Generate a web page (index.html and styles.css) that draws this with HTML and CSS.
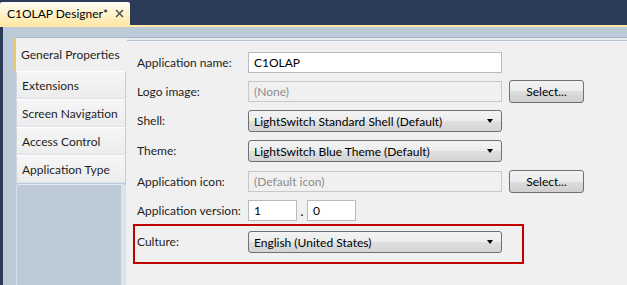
FILE: index.html
```html
<!DOCTYPE html>
<html>
<head>
<meta charset="utf-8">
<link rel="stylesheet" href="styles.css">
</head>
<body>
<div class="doc-tabs">
  <div class="doc-tab">
    <span class="doc-title">C1OLAP Designer*</span>
    <svg class="close" width="9" height="9" viewBox="0 0 9 9"><path d="M1 1L8 8M8 1L1 8" stroke="#505050" stroke-width="1.5" fill="none"/></svg>
  </div>
</div>
<div class="doc-strip"></div>
<div class="doc-body">
  <div class="page">
    <div class="side">
      <div class="vtab active">General Properties</div>
      <div class="vtab">Extensions</div>
      <div class="vtab">Screen Navigation</div>
      <div class="vtab">Access Control</div>
      <div class="vtab">Application Type</div>
      <div class="side-fill"></div>
    </div>
    <div class="content">
      <div class="row r1">
        <div class="label">Application name:</div>
        <div class="textbox">C1OLAP</div>
      </div>
      <div class="row r2">
        <div class="label">Logo image:</div>
        <div class="textbox disabled">(None)</div>
        <div class="button">Select...</div>
      </div>
      <div class="row r3">
        <div class="label">Shell:</div>
        <div class="combo"><span>LightSwitch Standard Shell (Default)</span><span class="arrow"></span></div>
      </div>
      <div class="row r4">
        <div class="label">Theme:</div>
        <div class="combo"><span>LightSwitch Blue Theme (Default)</span><span class="arrow"></span></div>
      </div>
      <div class="row r5">
        <div class="label">Application icon:</div>
        <div class="textbox disabled">(Default icon)</div>
        <div class="button">Select...</div>
      </div>
      <div class="row r6">
        <div class="label">Application version:</div>
        <div class="textbox small">1</div>
        <div class="dot">.</div>
        <div class="textbox small">0</div>
      </div>
      <div class="highlight">
        <div class="row">
          <div class="label">Culture:</div>
          <div class="combo"><span>English (United States)</span><span class="arrow"></span></div>
        </div>
      </div>
    </div>
  </div>
</div>
</body>
</html>
```

FILE: styles.css
```css
* { box-sizing: border-box; }
html, body { margin: 0; padding: 0; }
body {
  width: 627px;
  height: 285px;
  overflow: hidden;
  background: #2b3b58;
  font-family: "Segoe UI", Lato, "Noto Sans", sans-serif;
  font-size: 12px;
  color: #1e1e1e;
}
.doc-tabs {
  height: 25px;
  display: flex;
  align-items: flex-end;
}
.doc-tab {
  width: 130px;
  height: 23px;
  background: linear-gradient(#fffdf4, #fff3cc 50%, #ffe8a6);
  border-radius: 2px 2px 0 0;
  display: flex;
  align-items: center;
  padding-left: 7px;
  padding-right: 6px;
}
.doc-title { flex: 1; color: #000; }
.close { display: block; }
.doc-strip { height: 2px; background: #ffe8a6; }
.doc-body {
  margin-left: 3px;
  height: 258px;
  background: #bdcbd9;
  padding: 10px 0 0 11px;
  display: flex;
}
.page { flex: 1; display: flex; }
.side {
  width: 112px;
  display: flex;
  flex-direction: column;
}
.vtab {
  height: 28px;
  margin-left: 2px;
  padding-left: 5px;
  display: flex;
  align-items: center;
  background: linear-gradient(#f6f6f6, #ececec);
  border-left: 1px solid #cdd5df;
  border-right: 1px solid #c3ccd7;
  border-bottom: 1px solid #dce2e9;
  border-top: 1px solid #ffffff;
  color: #1e1e1e;
}
.vtab.active {
  height: 34px;
  margin-left: 0;
  margin-right: -1px;
  padding-left: 5px;
  background: #f0f0f0;
  border-left: 2px solid #e8c66c;
  border-top: 1px solid #a9b7c9;
  border-right: none;
  border-bottom: none;
  border-radius: 3px 0 0 0;
  position: relative;
  z-index: 1;
}
.side-fill {
  flex: 1;
  margin-top: 1px;
  margin-left: 2px;
  background: #bdcbd9;
  border-top: 1px solid #e4e9ef;
  border-left: 1px solid #d7dee7;
  border-right: 5px solid #dfe4eb;
  border-radius: 3px 3px 0 0;
}
.content {
  flex: 1;
  background: linear-gradient(#a3b1c3 0, #a3b1c3 1px, #e7ebf0 1px, #e7ebf0 3px, #b8c3d1 3px, #b8c3d1 4px, #f0f0f0 4px);
  padding-left: 11px;
  padding-top: 15px;
}
.row {
  display: flex;
  align-items: flex-start;
  height: 22px;
}
.r2, .r3, .r6 { margin-top: 7px; }
.r4 { margin-top: 8px; }
.r5 { margin-top: 9px; }
.label {
  width: 111px;
  line-height: 22px;
  color: #1e1e1e;
}
.textbox {
  width: 254px;
  height: 21px;
  border: 1px solid #b6bac1;
  background: #fff;
  padding-left: 5px;
  line-height: 19px;
  color: #000;
}
.textbox.disabled {
  background: #f0f0f0;
  border-color: #c8c8c8;
  color: #8d8d8d;
}
.textbox.small { width: 49px; }
.dot {
  width: 10px;
  text-align: center;
  line-height: 24px;
  font-weight: bold;
}
.combo {
  width: 254px;
  height: 22px;
  border: 1px solid #707070;
  border-radius: 3px;
  background: linear-gradient(#f3f3f3, #ececec 50%, #e0e0e0 50%, #d4d4d4);
  padding: 0 8px 0 5px;
  display: flex;
  align-items: center;
  justify-content: space-between;
  color: #000;
}
.arrow {
  width: 0;
  height: 0;
  border-left: 3.5px solid transparent;
  border-right: 3.5px solid transparent;
  border-top: 4px solid #000;
}
.button {
  width: 75px;
  height: 23px;
  margin-left: 7px;
  margin-top: -1px;
  border: 1px solid #707070;
  border-radius: 3px;
  background: linear-gradient(#f3f3f3, #ececec 50%, #dddddd 50%, #d0d0d0);
  text-align: center;
  line-height: 21px;
  color: #000;
}
.highlight {
  margin-top: 2px;
  margin-left: -4px;
  width: 391px;
  border: 2px solid #c00000;
  padding: 5px 20px 9px 2px;
}
```
